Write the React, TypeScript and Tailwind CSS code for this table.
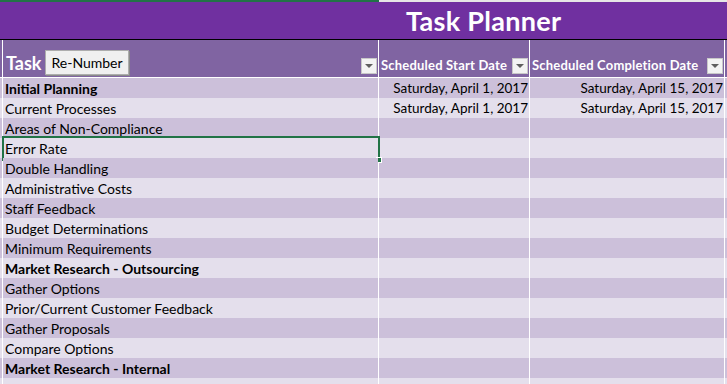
import React from 'react';

type Row = { task: string; bold?: boolean; start?: string; end?: string };

const rows: Row[] = [
	{ task: 'Initial Planning', bold: true, start: 'Saturday, April 1, 2017', end: 'Saturday, April 15, 2017' },
	{ task: 'Current Processes', start: 'Saturday, April 1, 2017', end: 'Saturday, April 15, 2017' },
	{ task: 'Areas of Non-Compliance' },
	{ task: 'Error Rate' },
	{ task: 'Double Handling' },
	{ task: 'Administrative Costs' },
	{ task: 'Staff Feedback' },
	{ task: 'Budget Determinations' },
	{ task: 'Minimum Requirements' },
	{ task: 'Market Research - Outsourcing', bold: true },
	{ task: 'Gather Options' },
	{ task: 'Prior/Current Customer Feedback' },
	{ task: 'Gather Proposals' },
	{ task: 'Compare Options' },
	{ task: 'Market Research - Internal', bold: true },
	{ task: 'Analysis' },
];

const FilterButton: React.FC = () => (
	<div className="w-[16px] h-[16px] shrink-0 bg-[#f3f3f3] border border-[#c8c8c8] flex items-center justify-center">
		<svg width="8" height="4" viewBox="0 0 8 4">
			<path d="M0 0 L8 0 L4 4 Z" fill="#5f5f5f" />
		</svg>
	</div>
);

const gridCols = 'grid grid-cols-[2px_375px_150px_194px_1fr] gap-x-px bg-white';

export default function App() {
	return (
		<div
			className="w-[727px] h-[384px] overflow-hidden bg-white"
			style={{ fontFamily: 'Lato, "Open Sans", sans-serif' }}
		>
			{/* top strip */}
			<div className="h-[2px] flex">
				<div className="w-[379px] bg-[#217346]" />
				<div className="flex-1 bg-[#e6e6e6]" />
			</div>

			{/* title band */}
			<div className="h-[37px] bg-[#7030a0] flex items-center pl-[406px]">
				<span className="text-white font-bold text-[27px] leading-none tracking-[0.3px]">Task Planner</span>
			</div>
			<div className="h-px bg-black" />

			{/* header row */}
			<div className={`${gridCols} h-[38px] pb-px`}>
				<div className="bg-[#8064a2]" />
				<div className="bg-[#8064a2] flex items-end justify-between pl-[3px] pr-[1px] pb-[3px]">
					<div className="flex items-end gap-[4px]">
						<span className="text-white font-bold text-[18px] leading-none mb-[2px]">Task</span>
						<button className="h-[25px] px-[5px] bg-[#f0f0f0] border border-[#adadad] text-[14px] leading-none text-black mb-[-1px] shadow-[1px_1px_0_#8a8a8a]">
							Re-Number
						</button>
					</div>
					<FilterButton />
				</div>
				<div className="bg-[#8064a2] flex items-end justify-between pl-[2px] pr-[1px] pb-[3px]">
					<span className="text-white font-bold text-[13px] tracking-[0.2px] leading-none mb-[2px] whitespace-nowrap">Scheduled Start Date</span>
					<FilterButton />
				</div>
				<div className="bg-[#8064a2] flex items-end justify-between pl-[2px] pr-[1px] pb-[3px]">
					<span className="text-white font-bold text-[13px] tracking-[0.2px] leading-none mb-[2px] whitespace-nowrap">Scheduled Completion Date</span>
					<FilterButton />
				</div>
				<div className="bg-[#8064a2]" />
			</div>

			{/* data rows */}
			{rows.map((row, i) => {
				const bg = i % 2 === 0 ? 'bg-[#ccc0da]' : 'bg-[#e4dfec]';
				const selected = row.task === 'Error Rate';
				return (
					<div key={row.task} className={`${gridCols} h-[20px] pb-px`}>
						<div className={bg} />
						<div className={`${bg} relative flex items-center pl-[2px] text-[14px] text-black whitespace-nowrap ${row.bold ? 'font-bold' : ''}`}>
							{row.task}
							{selected && (
								<div className="absolute left-[-1px] right-[-2px] top-[-2px] bottom-[-2px] border-2 border-[#217346]">
									<div className="absolute right-[-4px] bottom-[-4px] w-[6px] h-[6px] bg-[#217346] border border-white" />
								</div>
							)}
						</div>
						<div className={`${bg} flex items-center justify-end pr-[1px] text-[13.5px] text-black whitespace-nowrap`}>
							{row.start}
						</div>
						<div className={`${bg} flex items-center justify-end pr-[1px] text-[13.5px] text-black whitespace-nowrap`}>
							{row.end}
						</div>
						<div className={bg} />
					</div>
				);
			})}
		</div>
	);
}
